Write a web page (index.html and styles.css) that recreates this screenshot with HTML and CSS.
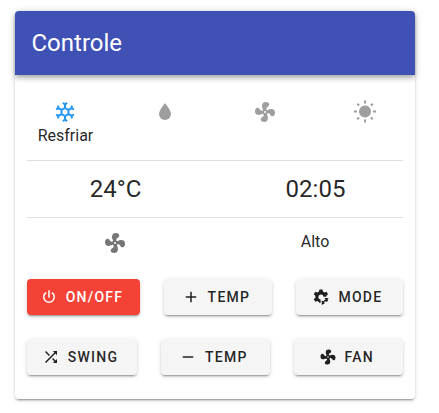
FILE: index.html
```
<!DOCTYPE html>
<html lang="pt-BR">
<head>
<meta charset="utf-8">
<title>Controle</title>
<link rel="stylesheet" href="styles.css">
</head>
<body>
<svg class="defs" aria-hidden="true">
  <symbol id="fan" viewBox="0 0 24 24"><path d="M12,11A1,1 0 0,0 11,12A1,1 0 0,0 12,13A1,1 0 0,0 13,12A1,1 0 0,0 12,11M12.5,2C17,2 17.11,5.57 14.75,6.75C13.76,7.24 13.32,8.29 13.13,9.22C13.61,9.42 14.03,9.73 14.35,10.13C18.05,8.13 22.03,8.92 22.03,12.5C22.03,17 18.46,17.1 17.28,14.73C16.78,13.74 15.72,13.3 14.79,13.11C14.59,13.59 14.28,14 13.88,14.34C15.87,18.03 15.08,22 11.5,22C7,22 6.91,18.42 9.27,17.24C10.25,16.75 10.69,15.71 10.89,14.79C10.4,14.59 9.97,14.27 9.65,13.87C5.96,15.85 2,15.07 2,11.5C2,7 5.56,6.89 6.74,9.26C7.24,10.25 8.29,10.68 9.22,10.87C9.41,10.39 9.73,9.97 10.14,9.65C8.15,5.96 8.94,2 12.5,2Z"/></symbol>
</svg>
<main class="card">
  <header class="toolbar">Controle</header>
  <section class="modes">
    <div class="mode active">
      <svg class="icon" viewBox="0 0 24 24"><path d="M20.79,13.95L18.46,14.57L16.46,13.44V10.56L18.46,9.43L20.79,10.05L21.31,8.12L19.54,7.65L20,5.88L18.07,5.36L17.45,7.69L15.45,8.82L13,7.38V5.12L14.71,3.41L13.29,2L12,3.29L10.71,2L9.29,3.41L11,5.12V7.38L8.5,8.82L6.5,7.69L5.92,5.36L4,5.88L4.47,7.65L2.7,8.12L3.22,10.05L5.55,9.43L7.55,10.56V13.45L5.55,14.58L3.22,13.96L2.7,15.89L4.47,16.36L4,18.12L5.93,18.64L6.55,16.31L8.55,15.18L11,16.62V18.88L9.29,20.59L10.71,22L12,20.71L13.29,22L14.7,20.59L13,18.88V16.62L15.5,15.17L17.5,16.3L18.12,18.63L20,18.12L19.53,16.35L21.3,15.88L20.79,13.95M9.5,10.56L12,9.11L14.5,10.56V13.44L12,14.89L9.5,13.44V10.56Z"/></svg>
      <span class="label">Resfriar</span>
    </div>
    <div class="mode"><svg class="icon" viewBox="0 0 24 24"><path d="M12,20A6,6 0 0,1 6,14C6,10 12,3.25 12,3.25C12,3.25 18,10 18,14A6,6 0 0,1 12,20Z"/></svg></div>
    <div class="mode"><svg class="icon"><use href="#fan"/></svg></div>
    <div class="mode"><svg class="icon" viewBox="0 0 24 24"><path d="M3.55,18.54L4.96,19.95L6.76,18.16L5.34,16.74M11,22.45H13V19.5H11M12,5.5A6,6 0 0,0 6,11.5A6,6 0 0,0 12,17.5A6,6 0 0,0 18,11.5C18,8.18 15.31,5.5 12,5.5M20,12.5H23V10.5H20M17.24,18.16L19.04,19.95L20.45,18.54L18.66,16.74M20.45,4.46L19.04,3.05L17.24,4.84L18.66,6.26M13,0.55H11V3.5H13M4,10.5H1V12.5H4M6.76,4.84L4.96,3.05L3.55,4.46L5.34,6.26L6.76,4.84Z"/></svg></div>
  </section>
  <section class="readings"><span>24°C</span><span>02:05</span></section>
  <section class="fan-speed"><svg class="icon"><use href="#fan"/></svg><span>Alto</span></section>
  <section class="actions">
    <div class="row">
      <button class="btn power"><svg viewBox="0 0 24 24"><path d="M16.56,5.44L15.11,6.89C16.84,7.94 18,9.83 18,12A6,6 0 0,1 12,18A6,6 0 0,1 6,12C6,9.83 7.16,7.94 8.88,6.88L7.44,5.44C5.36,6.88 4,9.28 4,12A8,8 0 0,0 12,20A8,8 0 0,0 20,12C20,9.28 18.64,6.88 16.56,5.44M13,3H11V13H13"/></svg>ON/OFF</button>
      <button class="btn temp"><svg viewBox="0 0 24 24"><path d="M19,13H13V19H11V13H5V11H11V5H13V11H19V13Z"/></svg>TEMP</button>
      <button class="btn mode-btn"><svg viewBox="0 0 24 24"><path d="M10 2H14L14.5 4.8L16.5 5.9L19.3 4.9L21.4 8.4L19.2 10.3V11.5H15.4A3.5 3.5 0 1 0 11.5 15.5V19.5H9.5L9.2 18.5L7.2 17.4L4.5 18.4L2.3 14.9L4.5 13V10.3L2.3 8.4L4.5 4.9L7.2 5.9L9.3 4.8Z"/><path d="M16.5 13.2H22.3L20.6 15L21.6 16.4L19.6 18.8L17.6 17.8L16 19L17.2 20.4L13 22.8V17L15 17.6L18 15Z"/></svg>MODE</button>
    </div>
    <div class="row">
      <button class="btn swing"><svg viewBox="0 0 24 24"><path d="M14.83,13.41L13.42,14.82L16.55,17.95L14.5,20H20V14.5L17.96,16.54L14.83,13.41M14.5,4L16.54,6.04L4,18.59L5.41,20L17.96,7.46L20,9.5V4M10.59,9.17L5.41,4L4,5.41L9.17,10.58L10.59,9.17Z"/></svg>SWING</button>
      <button class="btn temp"><svg viewBox="0 0 24 24"><path d="M19,13H5V11H19V13Z"/></svg>TEMP</button>
      <button class="btn fan-btn"><svg><use href="#fan"/></svg>FAN</button>
    </div>
  </section>
</main>
</body>
</html>
```
FILE: styles.css
```
* { box-sizing: border-box; }
body {
  margin: 0;
  padding: 11px 24px 14px 15px;
  background: #fff;
  color: rgba(0, 0, 0, .87);
  font: 16px/24px Roboto, sans-serif;
}
.defs { display: none; }
.card {
  width: 400px;
  height: 388px;
  border-radius: 4px;
  background: #fff;
  box-shadow: 0 3px 1px -2px rgba(0,0,0,.2), 0 2px 2px rgba(0,0,0,.14), 0 1px 5px rgba(0,0,0,.12);
}
.toolbar {
  height: 64px;
  padding: 0 16.5px;
  border-radius: 4px 4px 0 0;
  background: #3f51b5;
  color: #fff;
  font-size: 24px;
  line-height: 64px;
  box-shadow: 0 2px 4px -1px rgba(0,0,0,.2), 0 4px 5px rgba(0,0,0,.14), 0 1px 10px rgba(0,0,0,.12);
}
.icon { display: block; width: 24px; height: 24px; fill: currentColor; }
.modes { display: grid; grid-template-columns: repeat(4, 1fr); height: 85px; padding-top: 25px; }
.mode { display: flex; flex-direction: column; align-items: center; color: #9e9e9e; }
.active { color: #2196f3; }
.label { padding-left: 1px; color: rgba(0,0,0,.87); }
.readings, .fan-speed {
  display: grid;
  grid-template-columns: 1fr 1fr;
  column-gap: 24px;
  justify-items: center;
  margin: 0 12px;
  border-top: 1px solid #e0e0e0;
}
.readings { height: 57px; font-size: 24px; line-height: 56px; }
.readings span { padding-left: 1px; }
.fan-speed { height: 62px; padding-top: 12px; }
.fan-speed .icon { color: #757575; margin-top: 1px; }
.actions { display: flex; flex-direction: column; gap: 24px; padding: 0 12px; }
.row { display: flex; justify-content: space-between; }
.btn {
  display: flex;
  align-items: center;
  justify-content: center;
  height: 36px;
  padding: 0;
  border: 0;
  border-radius: 4px;
  background: #f5f5f5;
  color: rgba(0,0,0,.87);
  font: 500 14px/20px Roboto, sans-serif;
  letter-spacing: 1.25px;
  box-shadow: 0 3px 1px -2px rgba(0,0,0,.2), 0 2px 2px rgba(0,0,0,.14), 0 1px 5px rgba(0,0,0,.12);
}
.btn svg { width: 18px; height: 18px; margin: 0 8px 0 -4px; fill: currentColor; }
.power { width: 113px; background: #f44336; color: #fff; }
.temp { width: 108.7px; }
.mode-btn { width: 107.2px; }
.swing { width: 110px; }
.fan-btn { width: 109.3px; }
```
